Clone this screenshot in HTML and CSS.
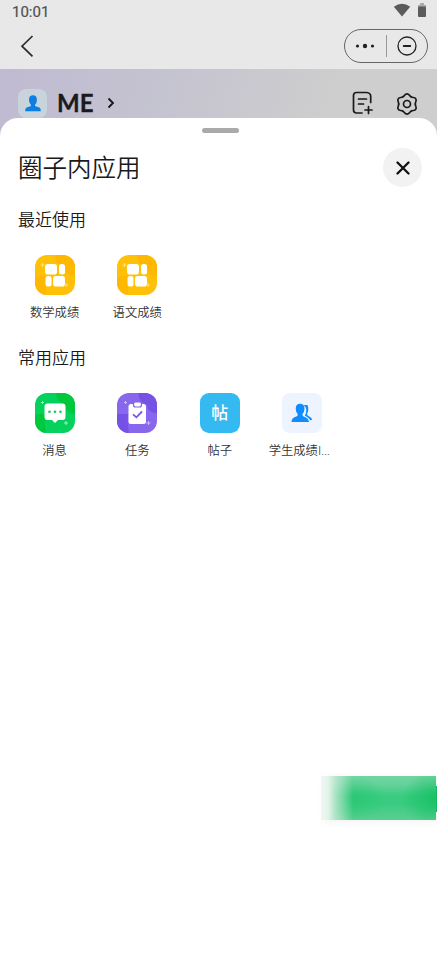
FILE: index.html
```
<!DOCTYPE html>
<html lang="zh-CN">
<head>
<meta charset="utf-8">
<title>圈子内应用</title>
<link rel="stylesheet" href="styles.css">
</head>
<body>
<div class="screen">
  <div class="status">
    <span class="time">10:01</span>
    <svg class="status-icons" width="34" height="18" viewBox="0 0 34 18"><path d="M.8 3.700Q9 -2.300 17.200 3.700L9 13.500Z" fill="#5b5b5b"/><path d="M25 2h2V0h4v2h2v2h-8z" fill="#aaa"/><rect x="25" y="3.500" width="8" height="10.500" rx="1" fill="#5b5b5b"/></svg>
  </div>
  <div class="nav">
    <svg class="back" width="14" height="22" viewBox="0 0 14 22" fill="none" stroke="#2b2b2b" stroke-width="1.700"><path d="M12.500 1L2 11.200 12.500 21.300"/></svg>
    <div class="capsule">
      <svg width="20" height="8" viewBox="0 0 20 8" fill="#222"><circle cx="2.500" cy="4" r="1.600"/><circle cx="10" cy="4" r="2.200"/><circle cx="17.500" cy="4" r="1.600"/></svg>
      <span class="divider"></span>
      <svg width="20" height="20" viewBox="0 0 20 20" fill="none" stroke="#222"><circle cx="10" cy="10" r="9" stroke-width="1.300"/><path d="M6.700 10h6.600" stroke-width="1.800" stroke-linecap="round"/></svg>
    </div>
  </div>
  <div class="circle">
    <span class="avatar"><svg width="16" height="17" viewBox="0 0 16 17" fill="#0d7fe0"><path d="M4 4.500C4 1.500 5.700.300 8 .300s3.900 1.300 3.900 4.200c0 2.600-.8 4.300-1.900 5.300v1.300l4.300 1.500c1.100.4 1.500 1.600 1.500 3.700H.2c0-2.100.5-3.300 1.600-3.700l4.200-1.500V9.800C4.900 8.800 4 7.100 4 4.500Z"/></svg></span>
    <span class="name">ME</span>
    <svg class="chev" width="8" height="12" viewBox="0 0 8 12" fill="none" stroke="#151515" stroke-width="1.800"><path d="M1.500 1.500L6 6 1.500 10.500"/></svg>
    <svg class="note" width="22" height="24" viewBox="0 0 22 24" fill="none" stroke="#191919" stroke-width="1.700" stroke-linecap="round"><path d="M10 22H4.500Q1.500 22 1.500 19V4.500Q1.500 1.500 4.500 1.500H14.500Q18.700 2 18.700 5V11.500M6.500 8h8M6.500 13h5M16.500 15.500v7M13 19h7"/></svg>
    <svg class="gear" width="24" height="24" viewBox="0 0 24 24" fill="none" stroke="#191919" stroke-width="1.700" stroke-linecap="round">
      <defs><path id="lobe" d="M7.850 4.800C9.800 4 9.600 1.800 12 1.800S14.200 4 16.150 4.800"/></defs>
      <use href="#lobe"/><use href="#lobe" transform="rotate(60 12 12)"/><use href="#lobe" transform="rotate(120 12 12)"/><use href="#lobe" transform="rotate(180 12 12)"/><use href="#lobe" transform="rotate(240 12 12)"/><use href="#lobe" transform="rotate(300 12 12)"/>
      <circle cx="12" cy="12" r="3.500"/>
    </svg>
  </div>
  <main class="sheet">
    <span class="handle"></span>
    <header class="sheet-head">
      <h1>圈子内应用</h1>
      <button class="close" aria-label="关闭"><svg width="14" height="14" viewBox="0 0 14 14" stroke="#111" stroke-width="2.300" stroke-linecap="round"><path d="M1.500 1.500l11 11M12.500 1.500l-11 11"/></svg></button>
    </header>
    <section>
      <h2>最近使用</h2>
      <div class="apps">
        <div class="app">
          <svg class="icon yellow" viewBox="0 0 40 40"><path d="M0 23Q6 20 11 21V40H0zM20 0h20v21q-10 0-10-9Q20 10 20 0z" fill="#ffb400" opacity=".75"/><g fill="#fff"><rect x="10" y="9" width="12" height="10.500" rx="2.800"/><rect x="24" y="9" width="6" height="10.500" rx="2.500"/><rect x="10.500" y="21" width="6" height="10.500" rx="2.500"/><rect x="18" y="21" width="12" height="10.500" rx="2.800"/></g><path d="M7.500 8v4M5.500 10h4M31 28v4M29 30h4" stroke="#ffe280"/></svg>
          <span>数学成绩</span>
        </div>
        <div class="app">
          <svg class="icon yellow" viewBox="0 0 40 40"><path d="M0 23Q6 20 11 21V40H0zM20 0h20v21q-10 0-10-9Q20 10 20 0z" fill="#ffb400" opacity=".75"/><g fill="#fff"><rect x="10" y="9" width="12" height="10.500" rx="2.800"/><rect x="24" y="9" width="6" height="10.500" rx="2.500"/><rect x="10.500" y="21" width="6" height="10.500" rx="2.500"/><rect x="18" y="21" width="12" height="10.500" rx="2.800"/></g><path d="M7.500 8v4M5.500 10h4M31 28v4M29 30h4" stroke="#ffe280"/></svg>
          <span>语文成绩</span>
        </div>
      </div>
    </section>
    <section>
      <h2>常用应用</h2>
      <div class="apps">
        <div class="app">
          <svg class="icon green" viewBox="0 0 40 40"><path d="M0 22Q5 20 10 21Q9 30 11 40H0zM21 0h19v21q-9 0-10-9Q22 9 21 0z" fill="#00c83c"/><path d="M12.500 10.500h15q3 0 3 3V24q0 3-3 3h-4.500L20 30l-3-3h-4.500q-3 0-3-3V13.500q0-3 3-3z" fill="#fff"/><g fill="#0bcf5b"><circle cx="14.500" cy="18.800" r="1.300"/><circle cx="20" cy="18.800" r="1.300"/><circle cx="25.500" cy="18.800" r="1.300"/></g><path d="M7.500 8v3M6 9.500h3M31 28v4M29 30h4" stroke="#9ff0bd"/></svg>
          <span>消息</span>
        </div>
        <div class="app">
          <svg class="icon purple" viewBox="0 0 40 40"><path d="M0 21h11q-1 9 1 19H0zM21 0h19v20q-9 0-10-8Q22 9 21 0z" fill="#7551e6"/><rect x="11.500" y="11" width="17.500" height="20" rx="2.500" fill="#fff"/><rect x="16.500" y="9" width="8" height="5" rx="2" fill="#fff" stroke="#8262ea" stroke-width="1.200"/><path d="M16 21.300l3.400 3L25 18.500" fill="none" stroke="#7957e6" stroke-width="1.800"/><path d="M8.500 8v3M7 9.500h3M31.500 28v4M29.500 30h4" stroke="#c9bbff"/></svg>
          <span>任务</span>
        </div>
        <div class="app">
          <div class="icon blue">帖</div>
          <span>帖子</span>
        </div>
        <div class="app">
          <svg class="icon pale" viewBox="0 0 40 40" fill="#108cff"><path d="M21.500 12H25.500Q26.600 14 26.300 17Q26 19.500 25 21Q25.300 22.500 26.500 23Q30 24.700 30.200 26.800L28.300 27.300Q26.500 24.500 22.800 22.500Q24.500 20 24.300 16.500Q24 13.700 21.500 12Z"/><path d="M13.700 15.800q0-5 4.400-5t4.400 5q0 3-1.900 5v1.500q0 .8 1.100 1.200 5.200 1.600 5.200 5.500H9.500q0-4.200 4.900-5.500 1.200-.3 1.200-1.200v-1.500Q13.700 18.800 13.700 15.800Z"/></svg>
          <span class="cut">学生成绩I...</span>
        </div>
      </div>
    </section>
    <div class="floating"></div>
  </main>
</div>
</body>
</html>
```
FILE: styles.css
```
* { box-sizing: border-box; }
body {
  margin: 0;
  font-family: "Noto Sans CJK SC", sans-serif;
  color: #1a1a1a;
  background: #fff;
}
.screen {
  position: relative;
  width: 437px;
  height: 973px;
  overflow: hidden;
  display: flex;
  flex-direction: column;
  background: #e8e8e8;
}
.status {
  height: 24px;
  flex: none;
  display: flex;
  justify-content: space-between;
  padding: 3px 10px 0 12px;
}
.time {
  font: 400 15px/18px Roboto, sans-serif;
  color: #505050;
  -webkit-text-stroke: .2px #505050;
}
.nav {
  height: 45px;
  flex: none;
  display: flex;
  align-items: center;
  justify-content: space-between;
  padding: 0 9px 1px 20px;
}
.capsule {
  width: 84px;
  height: 34px;
  border: 1px solid #666;
  border-radius: 17px;
  display: flex;
  align-items: center;
  justify-content: space-between;
  padding: 0 10px 0 10px;
}
.divider { width: 1px; height: 22px; background: #999; }
.circle {
  height: 68px;
  flex: none;
  display: flex;
  align-items: flex-start;
  padding: 20px 18px 0;
  background: linear-gradient(108deg, #c0bad2 0%, #c5c4d0 40%, #cecece 75%, #cecece 100%);
}
.avatar {
  width: 29px;
  height: 29px;
  border-radius: 8px;
  background: #c8d3dc;
  display: flex;
  align-items: center;
  justify-content: center;
}
.name {
  width: 39px;
  margin-left: 10px;
  font: 700 24px/28px Lato, sans-serif;
  -webkit-text-stroke: .3px #1a1a1a;
}
.chev { margin: 8px auto 0 11px; }
.note { margin: 2px 21px 0 0; }
.gear { margin: 3px 0 0; }
.sheet {
  position: relative;
  height: 855px;
  flex: none;
  margin-top: -19px;
  border-radius: 18px 18px 0 0;
  background: #fff;
  display: flex;
  flex-direction: column;
}
.handle {
  width: 37px;
  height: 5px;
  margin: 10px 198px 0 auto;
  border-radius: 3px;
  background: #aaa;
}
.sheet-head {
  height: 40px;
  margin-top: 14px;
  padding: 0 15px 0 18px;
  display: flex;
  align-items: center;
  justify-content: space-between;
}
h1, h2 { margin: 0; font-weight: 350; }
h1 { font-size: 24.500px; line-height: 40px; }
.close {
  width: 39px;
  height: 39px;
  padding: 1px 0 0;
  border: 0;
  border-radius: 50%;
  background: #f2f2f2;
  display: flex;
  align-items: center;
  justify-content: center;
}
section { height: 138px; }
h2 {
  padding: 20px 0 0 18px;
  font-size: 17px;
  line-height: 24px;
}
.apps {
  display: grid;
  grid-template-columns: repeat(4, 82.600px);
  padding: 24px 0 0 13.300px;
}
.app {
  display: flex;
  flex-direction: column;
  align-items: center;
  gap: 8px;
  font-size: 12.300px;
  font-weight: 350;
  line-height: 18px;
  white-space: nowrap;
  color: #333;
}
.cut {
  margin: 1px 6px 0 0;
  font-family: Roboto, "Noto Sans CJK SC", sans-serif;
}
.icon {
  width: 40px;
  height: 40px;
  border-radius: 12px;
}
.yellow { background: #ffc107; }
.green { background: #05d15d; }
.purple { background: #8967ec; }
.blue {
  background: #34b9f1;
  border-radius: 9px;
  color: #fff;
  font-size: 17px;
  font-weight: 500;
  line-height: 38px;
  text-align: center;
}
.pale { background: #edf4ff; border-radius: 8px; }
.floating {
  position: absolute;
  top: 658px;
  right: 1px;
  width: 115px;
  height: 44px;
  background:
    linear-gradient(90deg, #f0f6f2 0, #e4f3ea 7px, rgba(210, 236, 221, .75) 14px, rgba(200, 230, 214, 0) 32px),
    radial-gradient(ellipse 35px 28px at 115px 23px, #18c166, rgba(24, 193, 102, 0)),
    radial-gradient(ellipse 30px 22px at 35px 23px, rgba(38, 199, 113, .75), rgba(38, 199, 113, 0)),
    linear-gradient(#72d5a2, #65d19a 20%, #39cc80 45%, #39cc80 62%, #5bce91);
  box-shadow: 3px 2px 8px rgba(0, 0, 0, .05);
}
.floating::after {
  content: "";
  position: absolute;
  top: 10px;
  right: -1px;
  width: 1px;
  height: 26px;
  background: #18b861;
}
```
